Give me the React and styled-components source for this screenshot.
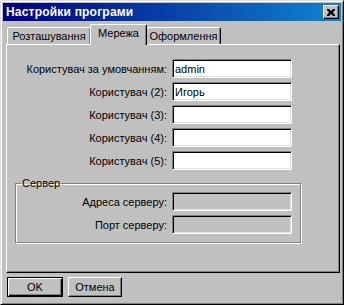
import React from "react";
import styled, { createGlobalStyle } from "styled-components";

const GlobalStyle = createGlobalStyle`
  html, body {
    margin: 0;
    padding: 0;
    background: #c0c0c0;
  }
  * {
    box-sizing: border-box;
  }
`;

const Window = styled.div`
  width: 344px;
  height: 305px;
  background: #c0c0c0;
  border: 1px solid;
  border-color: #dfdfdf #000 #000 #dfdfdf;
  box-shadow: inset 1px 1px #fff, inset -1px -1px #808080;
  padding: 2px;
  display: flex;
  flex-direction: column;
  font-family: "Liberation Sans", Arial, sans-serif;
  font-size: 11px;
  color: #000;
`;

const TitleBar = styled.div`
  height: 18px;
  flex: none;
  background: linear-gradient(to right, #000080, #1084d0);
  display: flex;
  align-items: center;
  justify-content: space-between;
  padding: 0 2px 0 3px;
`;

const Title = styled.span`
  color: #fff;
  font-weight: bold;
  font-size: 12px;
  letter-spacing: 0.2px;
`;

const CloseButton = styled.button`
  width: 16px;
  height: 14px;
  padding: 0;
  background: #c0c0c0;
  border: 1px solid;
  border-color: #fff #000 #000 #fff;
  box-shadow: inset -1px -1px #808080;
  display: flex;
  align-items: center;
  justify-content: center;
`;

const Body = styled.div`
  flex: 1;
  display: flex;
  flex-direction: column;
  padding: 3px 0 0 3px;
`;

const TabRow = styled.div`
  display: flex;
  align-items: flex-end;
  height: 20px;
  padding-left: 1px;
  position: relative;
  z-index: 1;
`;

const Tab = styled.div`
  width: ${({ $w }) => $w}px;
  height: ${({ $active }) => ($active ? "21px" : "17px")};
  margin: ${({ $active }) => ($active ? "0 -1px -1px" : "0")};
  padding-top: 2px;
  background: #c0c0c0;
  border: 1px solid;
  border-bottom: none;
  border-color: #fff #000 transparent #fff;
  border-radius: 2px 2px 0 0;
  box-shadow: inset -1px 0 #808080;
  display: flex;
  justify-content: center;
  align-items: flex-start;
  white-space: nowrap;
  position: relative;
  z-index: ${({ $active }) => ($active ? 2 : 1)};
`;

const Panel = styled.div`
  height: 229px;
  margin-right: 1px;
  border: 1px solid;
  border-color: #fff #000 #000 #fff;
  box-shadow: inset -1px -1px #808080;
  padding: 14px 38px 0 8px;
  display: flex;
  flex-direction: column;
`;

const FormGrid = styled.div`
  display: grid;
  grid-template-columns: 1fr 120px;
  column-gap: 5px;
  row-gap: 4px;
  margin-right: ${({ $inset }) => $inset}px;
`;

const Label = styled.label`
  height: 19px;
  display: flex;
  align-items: center;
  justify-content: flex-end;
  white-space: nowrap;
`;

const Field = styled.input`
  height: 19px;
  width: 120px;
  margin: 0;
  padding: 0 2px;
  font: inherit;
  color: #000;
  background: ${({ disabled }) => (disabled ? "#c0c0c0" : "#fff")};
  border: 1px solid;
  border-color: #808080 #fff #fff #808080;
  box-shadow: inset 1px 1px #000, inset -1px -1px #dfdfdf;
  outline: none;
`;

const GroupBox = styled.fieldset`
  margin: 7px 0 0;
  padding: 3px 8px 8px 0;
  border: 1px solid #808080;
  box-shadow: inset 1px 1px #fff, 1px 1px #fff;
  min-width: 0;
`;

const Legend = styled.legend`
  padding: 0 1px;
  margin-left: 5px;
`;

const ButtonRow = styled.div`
  display: flex;
  gap: 5px;
  padding: 4px 0 0 1px;
`;

const Button = styled.button`
  height: 20px;
  width: ${({ $w }) => $w}px;
  padding: 0;
  font: inherit;
  font-size: 11px;
  color: #000;
  background: #c0c0c0;
  border: 1px solid;
  border-color: ${({ $default }) =>
    $default ? "#000" : "#fff #000 #000 #fff"};
  box-shadow: ${({ $default }) =>
    $default
      ? "inset 1px 1px #fff, inset -1px -1px #000, inset -2px -2px #808080"
      : "inset -1px -1px #808080"};
`;

const users = [
  { label: "Користувач за умовчанням:", value: "admin" },
  { label: "Користувач (2):", value: "Игорь" },
  { label: "Користувач (3):", value: "" },
  { label: "Користувач (4):", value: "" },
  { label: "Користувач (5):", value: "" },
];

export default function App() {
  return (
    <>
      <GlobalStyle />
      <Window>
        <TitleBar>
          <Title>Настройки програми</Title>
          <CloseButton>
            <svg width="8" height="7" viewBox="0 0 8 7">
              <path d="M0 0h2l2 2 2-2h2v1l-2 2.5 2 2.5v1H6L4 5 2 7H0V6l2-2.5L0 1z" fill="#000" />
            </svg>
          </CloseButton>
        </TitleBar>
        <Body>
          <TabRow>
            <Tab $w={84}>Розташування</Tab>
            <Tab $active $w={57}>Мережа</Tab>
            <Tab $w={75}>Оформлення</Tab>
          </TabRow>
          <Panel>
            <FormGrid $inset={9}>
              {users.map((u) => (
                <React.Fragment key={u.label}>
                  <Label>{u.label}</Label>
                  <Field readOnly defaultValue={u.value} />
                </React.Fragment>
              ))}
            </FormGrid>
            <GroupBox>
              <Legend>Сервер</Legend>
              <FormGrid $inset={0}>
                <Label>Адреса серверу:</Label>
                <Field disabled />
                <Label>Порт серверу:</Label>
                <Field disabled />
              </FormGrid>
            </GroupBox>
          </Panel>
          <ButtonRow>
            <Button $default $w={56}>OK</Button>
            <Button $w={54}>Отмена</Button>
          </ButtonRow>
        </Body>
      </Window>
    </>
  );
}
